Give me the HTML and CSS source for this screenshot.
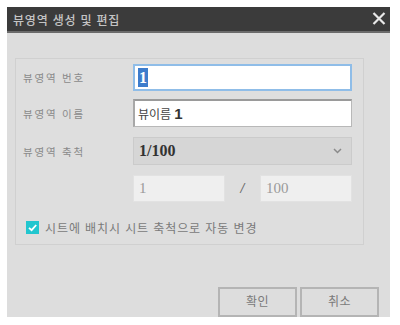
FILE: index.html
```html
<!DOCTYPE html>
<html lang="ko">
<head>
<meta charset="utf-8">
<link rel="stylesheet" href="styles.css">
</head>
<body>
<div class="dialog">
  <div class="titlebar">
    <span class="title">뷰영역 생성 및 편집</span>
    <svg class="close" width="14" height="13" viewBox="0 0 14 13"><path d="M1.5 1 L12.5 12 M12.5 1 L1.5 12" stroke="#e8e8e8" stroke-width="2.2" fill="none"/></svg>
  </div>
  <div class="content">
    <div class="panel">
      <div class="row">
        <span class="label">뷰영역 번호</span>
        <div class="input focused"><span class="sel">1</span></div>
      </div>
      <div class="row">
        <span class="label">뷰영역 이름</span>
        <div class="input normal"><span class="ko">뷰이름</span> <span class="num">1</span></div>
      </div>
      <div class="row">
        <span class="label">뷰영역 축척</span>
        <div class="select"><span class="selval">1/100</span>
          <svg class="chev" width="9" height="6" viewBox="0 0 9 6"><path d="M1 1 L4.5 4.5 L8 1" stroke="#8a8a8a" stroke-width="1.5" fill="none"/></svg>
        </div>
      </div>
      <div class="row">
        <span class="label"></span>
        <div class="ratio">
          <div class="dis">1</div>
          <span class="slash">/</span>
          <div class="dis">100</div>
        </div>
      </div>
      <div class="check">
        <span class="box"><svg width="13" height="13" viewBox="0 0 13 13"><path d="M3 6.8 L5.6 9.2 L10.2 4" stroke="#fff" stroke-width="1.8" fill="none"/></svg></span>
        <span class="checklabel">시트에 배치시 시트 축척으로 자동 변경</span>
      </div>
    </div>
    <div class="buttons">
      <div class="btn">확인</div>
      <div class="btn">취소</div>
    </div>
  </div>
</div>
</body>
</html>
```
FILE: styles.css
```css
html, body {
  margin: 0;
  padding: 0;
  background: #ffffff;
}
body {
  padding: 7px 10px 8px 7px;
  font-family: "Noto Sans CJK KR", "Noto Sans", sans-serif;
}
.dialog {
  width: 383px;
  height: 310px;
  background: #dddddd;
  display: flex;
  flex-direction: column;
  overflow: hidden;
}
.titlebar {
  height: 28px;
  background: #3b3b3b;
  border-bottom: 2px solid #6b6b6b;
  display: flex;
  align-items: center;
  justify-content: space-between;
  padding: 0 4px 0 6px;
}
.title {
  color: #c4c4c4;
  font-size: 12px;
  font-weight: 500;
  letter-spacing: 0.8px;
}
.close {
  display: block;
  margin-top: -1px;
}
.content {
  padding: 25px 26px 0 8px;
  display: flex;
  flex-direction: column;
}
.panel {
  width: 340px;
  height: 180px;
  border: 1px solid #d0d0d0;
  background: #dedede;
  padding: 5px 0 0 7px;
  display: flex;
  flex-direction: column;
}
.row {
  display: flex;
  align-items: center;
}
.row + .row {
  margin-top: 8px;
}
.row:nth-child(3), .row:nth-child(4) {
  margin-top: 10px;
}
.label {
  width: 110px;
  font-size: 10.5px;
  color: #8a8a8a;
  letter-spacing: 1.8px;
}
.input {
  box-sizing: border-box;
  width: 219px;
  height: 28px;
  background: #ffffff;
  display: flex;
  align-items: center;
  padding-left: 3px;
  font-size: 14px;
  color: #333;
}
.input.focused {
  height: 27px;
  border: 2px solid #8fbde8;
}
.input.normal {
  border: 1px solid #b8b8b8;
  border-top: 2px solid #9a9a9a;
  border-left: 2px solid #a8a8a8;
}
.sel {
  background: #3d7ccc;
  color: #fff;
  font-family: "Liberation Serif", serif;
  font-weight: bold;
  font-size: 16px;
  line-height: 19px;
  padding: 0 1px;
}
.ko {
  font-size: 12px;
  color: #444;
  margin-right: 3px;
}
.num {
  font-family: "Liberation Sans", sans-serif;
  font-weight: bold;
  font-size: 15px;
  color: #333;
}
.select {
  box-sizing: border-box;
  width: 219px;
  height: 28px;
  background: #d6d6d6;
  border: 1px solid #cbcbcb;
  display: flex;
  align-items: center;
  justify-content: space-between;
  padding: 0 9px 0 5px;
}
.selval {
  font-family: "Liberation Serif", serif;
  font-weight: bold;
  font-size: 16px;
  color: #333;
}
.ratio {
  width: 219px;
  display: flex;
  align-items: center;
}
.dis {
  box-sizing: border-box;
  width: 92px;
  height: 27px;
  background: #efefef;
  border: 1px solid #e2e2e2;
  display: flex;
  align-items: center;
  padding-left: 5px;
  font-family: "Liberation Serif", serif;
  font-size: 15px;
  color: #9a9a9a;
}
.slash {
  width: 35px;
  text-align: center;
  font-family: "Liberation Serif", serif;
  font-style: italic;
  font-weight: bold;
  font-size: 14px;
  color: #666;
}
.ratio .dis:last-child {
  flex: 1;
}
.check {
  display: flex;
  align-items: center;
  margin-top: 17px;
  padding-left: 3px;
}
.box {
  width: 13px;
  height: 13px;
  background: #22c6cf;
  display: block;
}
.box svg {
  display: block;
}
.checklabel {
  margin-left: 6px;
  font-size: 12px;
  color: #7a7a7a;
  letter-spacing: 0.9px;
}
.buttons {
  display: flex;
  justify-content: flex-end;
  gap: 3px;
  margin-top: 42px;
  margin-right: -15px;
}
.btn {
  box-sizing: border-box;
  width: 79px;
  height: 30px;
  border: 2px solid #b4b4b4;
  background: #dddddd;
  display: flex;
  align-items: center;
  justify-content: center;
  padding-bottom: 4px;
  font-size: 12px;
  color: #7a7a7a;
  letter-spacing: 0.5px;
}
```
